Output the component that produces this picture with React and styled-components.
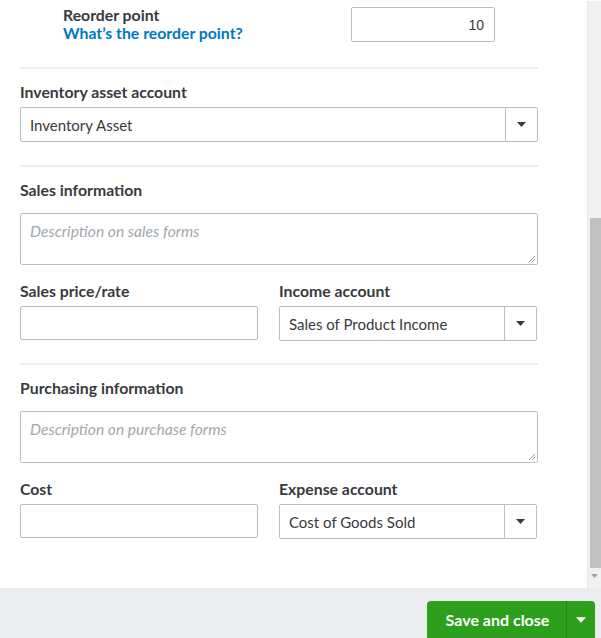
import React from "react";
import styled, { createGlobalStyle } from "styled-components";

const Global = createGlobalStyle`
  html, body { margin: 0; padding: 0; background: #fff; }
  body { font-family: Lato, "Noto Sans", sans-serif; color: #393a3d; }
  * { box-sizing: border-box; }
`;

const Frame = styled.div`
  width: 601px;
  height: 638px;
  display: flex;
  flex-direction: column;
  overflow: hidden;
`;

const Body = styled.div`
  flex: 1;
  display: flex;
  min-height: 0;
`;

const Content = styled.div`
  flex: 1;
  padding: 6px 0 0 20px;
  background: #fff;
`;

const Form = styled.div`
  width: 518px;
  display: flex;
  flex-direction: column;
`;

const ReorderRow = styled.div`
  display: flex;
  align-items: flex-start;
  padding-left: 43px;
`;

const ReorderText = styled.div`
  display: flex;
  flex-direction: column;
  width: 288px;
`;

const Label = styled.div`
  font-size: 15.8px;
  font-weight: 700;
  line-height: 18px;
  color: #393a3d;
  margin-bottom: ${(p) => p.$mb ?? 6}px;
`;

const Link = styled.a`
  font-size: 15.8px;
  font-weight: 700;
  line-height: 18px;
  color: #0077c5;
  text-decoration: none;
`;

const NumberBox = styled.div`
  margin-top: 1px;
  width: 144px;
  height: 35px;
  border: 1px solid #babec5;
  border-radius: 2px;
  display: flex;
  align-items: center;
  justify-content: flex-end;
  padding-right: 10px;
  font-family: "Liberation Sans", Arial, sans-serif;
  font-size: 14px;
  color: #393a3d;
`;

const Divider = styled.div`
  height: 2px;
  background: #eceef1;
  margin: ${(p) => p.$top}px 0 14px;
`;

const TextBox = styled.div`
  height: 34px;
  border: 1px solid #babec5;
  border-radius: 2px;
  background: #fff;
`;

const Select = styled.div`
  height: ${(p) => p.$h ?? 35}px;
  border: 1px solid #babec5;
  border-radius: 2px;
  display: flex;
  align-items: stretch;
  font-size: 15px;
  color: #393a3d;
`;

const SelectValue = styled.div`
  flex: 1;
  display: flex;
  align-items: center;
  padding-left: 9px;
`;

const SelectArrow = styled.div`
  width: 32px;
  border-left: 1px solid #babec5;
  display: flex;
  align-items: center;
  justify-content: center;
`;

const Area = styled.div`
  position: relative;
  height: 52px;
  border: 1px solid #babec5;
  border-radius: 2px;
  padding: 8px 9px;
  font-size: 15.6px;
  font-style: italic;
  color: #a4a7ad;
  line-height: 18px;
`;

const Grip = styled.svg`
  position: absolute;
  right: 1px;
  bottom: 1px;
`;

const Pair = styled.div`
  display: grid;
  grid-template-columns: 238px 258px;
  column-gap: 21px;
  margin-top: 17px;
`;

const Field = styled.div`
  display: flex;
  flex-direction: column;
`;

const ScrollTrack = styled.div`
  width: 14px;
  background: #f1f1f1;
  border-left: 1px solid #e8e8e8;
  margin-top: 1px;
  display: flex;
  flex-direction: column;
  align-items: flex-end;
`;

const Thumb = styled.div`
  margin-top: 217px;
  width: 11px;
  height: 350px;
  background: #c1c1c1;
`;

const ArrowDown = styled.div`
  margin-top: 6px;
  width: 13px;
  display: flex;
  justify-content: center;
`;

const Footer = styled.div`
  height: 50px;
  background: #ebecef;
  display: flex;
  justify-content: flex-end;
  align-items: flex-end;
  padding-right: 6px;
`;

const SplitButton = styled.div`
  display: flex;
  height: 37px;
  background: #2ca01c;
  border-radius: 4px 4px 0 0;
  color: #fff;
  overflow: hidden;
`;

const MainAction = styled.div`
  width: 140px;
  display: flex;
  align-items: center;
  justify-content: center;
  font-size: 16px;
  font-weight: 700;
  padding-left: 2px;
  border-right: 1px solid #23881a;
`;

const MenuAction = styled.div`
  width: 28px;
  display: flex;
  align-items: center;
  justify-content: center;
`;

const Caret = ({ color = "#393a3d", w = 9, h = 5 }) => (
  <svg width={w} height={h} viewBox="0 0 9 5">
    <path d="M0 0h9L4.5 5z" fill={color} />
  </svg>
);

const ResizeGrip = () => (
  <Grip width="8" height="8" viewBox="0 0 8 8">
    <path d="M7 1L1 7M7 4L4 7" stroke="#9a9a9a" strokeWidth="1" />
  </Grip>
);

const SelectField = ({ value }) => (
  <Select>
    <SelectValue>{value}</SelectValue>
    <SelectArrow>
      <Caret />
    </SelectArrow>
  </Select>
);

export default function App() {
  return (
    <Frame>
      <Global />
      <Body>
        <Content>
          <Form>
            <ReorderRow>
              <ReorderText>
                <Label $mb={0}>Reorder point</Label>
                <Link href="#">What’s the reorder point?</Link>
              </ReorderText>
              <NumberBox>10</NumberBox>
            </ReorderRow>

            <Divider $top={25} />
            <Label>Inventory asset account</Label>
            <SelectField value="Inventory Asset" />

            <Divider $top={23} />
            <Label $mb={14}>Sales information</Label>
            <Area>
              Description on sales forms
              <ResizeGrip />
            </Area>
            <Pair>
              <Field>
                <Label>Sales price/rate</Label>
                <TextBox />
              </Field>
              <Field>
                <Label>Income account</Label>
                <SelectField value="Sales of Product Income" />
              </Field>
            </Pair>

            <Divider $top={22} />
            <Label $mb={14}>Purchasing information</Label>
            <Area>
              Description on purchase forms
              <ResizeGrip />
            </Area>
            <Pair>
              <Field>
                <Label>Cost</Label>
                <TextBox />
              </Field>
              <Field>
                <Label>Expense account</Label>
                <SelectField value="Cost of Goods Sold" />
              </Field>
            </Pair>
          </Form>
        </Content>
        <ScrollTrack>
          <Thumb />
          <ArrowDown>
            <Caret color="#a3a3a3" w={7} h={4} />
          </ArrowDown>
        </ScrollTrack>
      </Body>
      <Footer>
        <SplitButton>
          <MainAction>Save and close</MainAction>
          <MenuAction>
            <Caret color="#fff" w={10} h={6} />
          </MenuAction>
        </SplitButton>
      </Footer>
    </Frame>
  );
}
